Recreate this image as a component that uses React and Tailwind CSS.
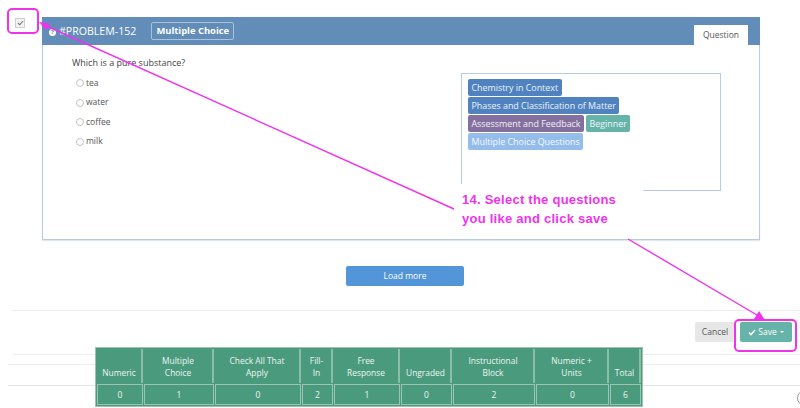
import React from "react";

const answers = ["tea", "water", "coffee", "milk"];
const cols = [
  [["Numeric"], 46, "0"],
  [["Multiple", "Choice"], 70, "1"],
  [["Check All That", "Apply"], 86, "0"],
  [["Fill-", "In"], 31, "2"],
  [["Free", "Response"], 66, "1"],
  [["Ungraded"], 51, "0"],
  [["Instructional", "Block"], 82, "2"],
  [["Numeric +", "Units"], 73, "0"],
  [["Total"], 31, "6"],
];

function Tag({ children, className }) {
  return (
    <span className={"inline-block h-[17px] rounded-[2px] px-[3.5px] text-[8.9px] leading-[17px] text-white/90 whitespace-nowrap " + className}>
      {children}
    </span>
  );
}

export default function App() {
  return (
    <div className="relative h-[408px] w-[800px] overflow-hidden bg-white font-['Open_Sans',sans-serif] text-[#444]">
      <div className="flex pt-[17px]">
        <div className="w-[42px] shrink-0" />
        <section className="h-[223px] w-[718px] border border-t-0 border-[#b7cbe4] shadow-[0_1px_1px_#dfe7f1]">
          <header className="-mx-px flex h-[28px] items-end justify-between bg-[#638db9] pl-[7px] pr-[12px]">
            <div className="flex h-full items-center pt-[2px] text-white">
              <span className="flex h-[7px] w-[7px] items-center justify-center rounded-full bg-white text-[6px] font-bold leading-none text-[#638db9]">?</span>
              <span className="ml-[3px] text-[10.6px]">#PROBLEM-152</span>
              <span className="ml-[15px] -translate-y-px rounded-[2px] border border-[#a9c1da] px-[4px] text-[9.4px] font-bold leading-[16px]">Multiple Choice</span>
            </div>
            <div className="h-[20px] w-[54px] bg-white text-center text-[8.5px] leading-[20px] text-[#555]">Question</div>
          </header>
          <div className="flex justify-between pl-[29px] pr-[38px] pt-[12px]">
            <div>
              <p className="text-[9px] leading-[12px] text-[#444]">Which is a pure substance?</p>
              <ul className="ml-[4px] mt-[8px] flex flex-col gap-[7.5px]">
                {answers.map((a) => (
                  <li key={a} className="flex h-[12px] items-center gap-[2px] text-[8.5px] text-[#555]">
                    <span className="h-[8px] w-[8px] rounded-full border border-[#c4c4c4] bg-white" />
                    {a}
                  </li>
                ))}
              </ul>
            </div>
            <div className="mt-[16px] flex h-[118px] w-[260px] flex-col items-start gap-[1px] border border-[#b7cbe4] pl-[6px] pt-[5px]">
              <Tag className="bg-[#4f82bf]">Chemistry in Context</Tag>
              <Tag className="bg-[#4f82bf]">Phases and Classification of Matter</Tag>
              <div className="flex gap-[2px]">
                <Tag className="bg-[#83709f]">Assessment and Feedback</Tag>
                <Tag className="bg-[#66b3a9]">Beginner</Tag>
              </div>
              <Tag className="bg-[#94bdec]">Multiple Choice Questions</Tag>
            </div>
          </div>
        </section>
      </div>

      <div className="ml-[346px] mt-[26px] flex">
        <button className="h-[20px] w-[118px] rounded-[2px] bg-[#5295d8] text-[8.5px] text-white">Load more</button>
      </div>

      <div className="ml-[12px] mt-[24px] border-t border-[#eeeeee]" />
      <div className="mt-[11px] flex justify-end gap-[5px] pr-[8px]">
        <button className="h-[20px] w-[40px] rounded-[2px] bg-[#e7e7e7] text-[8.5px] text-[#555]">Cancel</button>
        <button className="flex h-[20px] w-[52px] items-center justify-center gap-[2px] rounded-[2px] bg-[#66b3a9] text-[8.5px] text-white">
          <svg width="8" height="7" viewBox="0 0 8 7"><path d="M1 3.5 3 5.5 7 1" fill="none" stroke="white" strokeWidth="1.6" /></svg>
          Save
          <span className="ml-[1px] h-0 w-0 border-x-[2px] border-t-[2px] border-x-transparent border-t-white" />
        </button>
      </div>
      <div className="ml-[13px] mt-[12px] border-t border-[#eeeeee]" />
      <div className="ml-[8px] mt-[9px] border-t border-[#eeeeee]" />
      <div className="ml-[8px] mt-[20px] border-t border-[#e6e6e6]" />

      <div className="absolute left-[15px] top-[18px] flex h-[10px] w-[10px] items-center justify-center border border-[#cfcfcf] bg-[#f2f2f2]">
        <svg width="7" height="6" viewBox="0 0 7 6"><path d="M1 3 2.8 4.8 6 1" fill="none" stroke="#777" strokeWidth="1.1" /></svg>
      </div>

      <div className="absolute left-[797px] top-[390px] h-[16px] w-[16px] rounded-full border border-[#999] bg-white" />

      <table className="absolute left-[95px] top-[347px] w-[548px] table-fixed border-separate border-spacing-[1px] border border-[#9cc4b3] bg-[#4a9a7e] text-center text-[8.4px] font-medium leading-[12px] text-white/90">
        <colgroup>
          {cols.map((c) => (
            <col key={c[0][0] + c[1]} style={{ width: c[1] }} />
          ))}
        </colgroup>
        <tbody>
          <tr>
            {cols.map((c) => (
              <th key={c[0][0] + c[1]} className="h-[34px] border-r-2 border-[#8fbba9] p-0 pb-[4px] align-bottom font-medium">
                {c[0].map((l) => (
                  <div key={l}>{l}</div>
                ))}
              </th>
            ))}
          </tr>
          <tr>
            {cols.map((c) => (
              <td key={c[0][0] + c[1]} className="h-[21px] border border-[#9cc4b3] p-0 text-[8.5px] font-normal">{c[2]}</td>
            ))}
          </tr>
        </tbody>
      </table>

      <div className="absolute left-[461px] top-[184px] h-[48px] w-[182px] bg-white pl-[1px] pt-[7px] font-['Liberation_Sans',sans-serif] text-[13px] font-bold leading-[18.5px] tracking-[0.25px] text-[#f032ec]">
        14. Select the questions<br />you like and click save
      </div>
      <svg className="absolute left-0 top-0" width="800" height="408" viewBox="0 0 800 408" fill="none">
        <rect x="8" y="9" width="30" height="24" rx="4" stroke="#f032ec" strokeWidth="2" />
        <rect x="735" y="320" width="61" height="31" rx="4" stroke="#f032ec" strokeWidth="2" />
        <path d="M42 24 454 209" stroke="#f032ec" strokeWidth="1.4" />
        <path d="M39 22 50 23.5 46 30Z" fill="#f032ec" />
        <path d="M628 239 762 318" stroke="#f032ec" strokeWidth="1.4" />
        <path d="M765 320 754 319 759 311Z" fill="#f032ec" />
      </svg>
    </div>
  );
}
